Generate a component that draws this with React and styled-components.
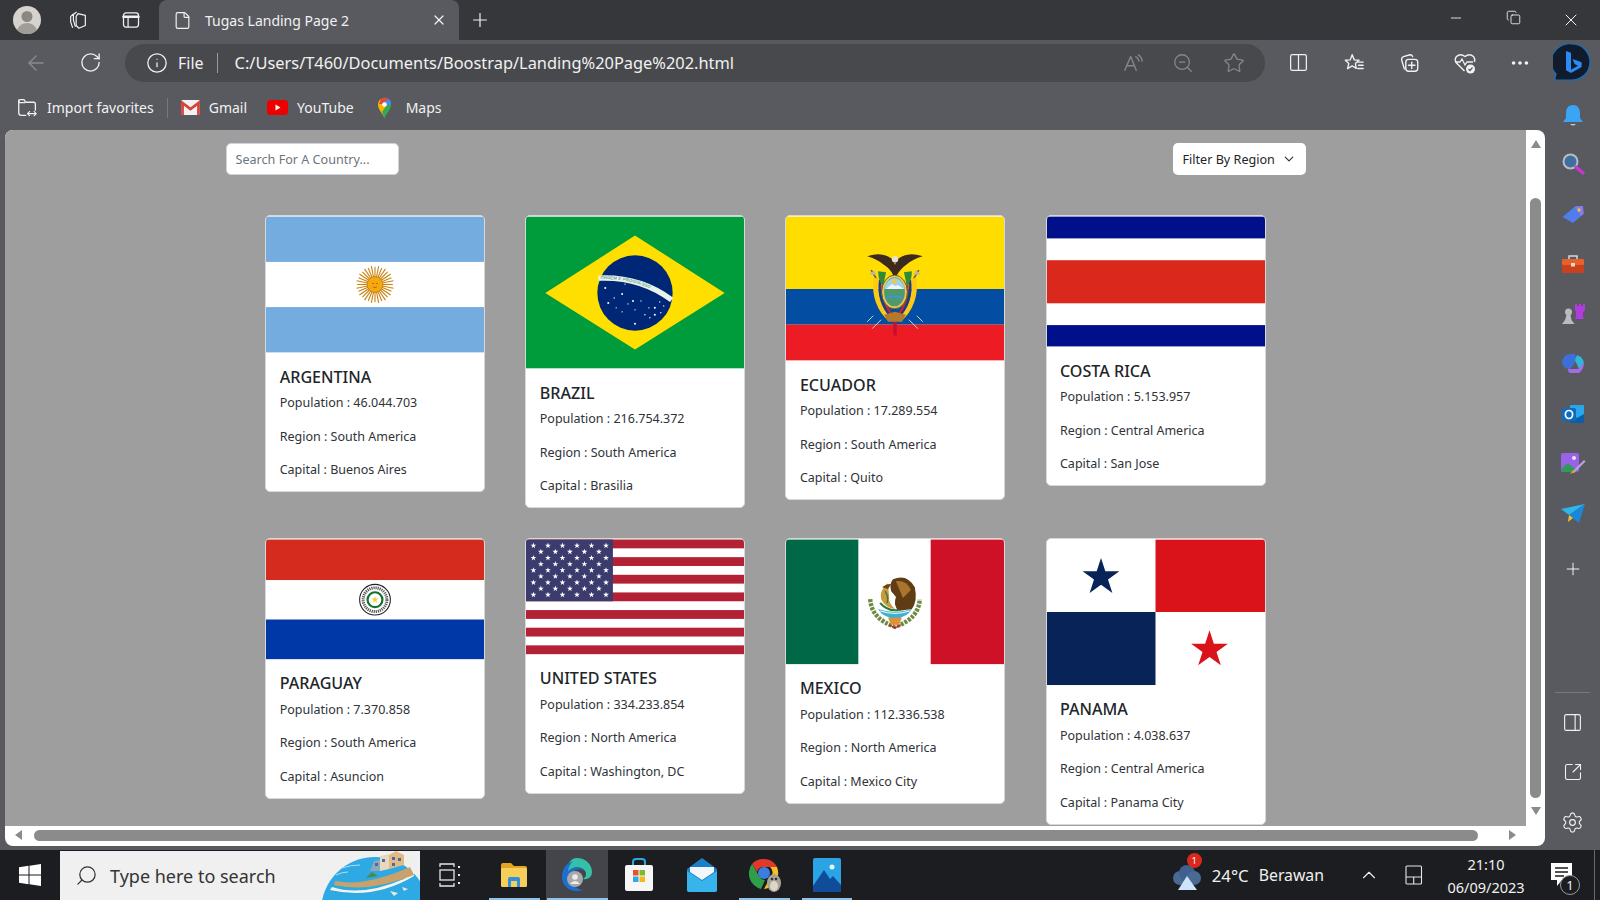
import React from "react"
import styled, { createGlobalStyle } from "styled-components"
import {
  ArrowLeft, ChevronUp, Copy, File, Info, Minus, Plus, RotateCw, Search,
  Settings, Star, X, ZoomOut, Ellipsis, Columns2, PanelRight, SquareArrowOutUpRight,
} from "lucide-react"

const GlobalStyle = createGlobalStyle`
  * { box-sizing: border-box; }
  html, body { margin: 0; padding: 0; overflow: hidden; }
  body { font-family: "Noto Sans", "Open Sans", sans-serif; }
`

const Screen = styled.div`
  width: 1600px;
  height: 900px;
  display: flex;
  flex-direction: column;
  background: #595a5f;
  color: #f1f1f1;
  overflow: hidden;
`

/* title bar */
const TitleBar = styled.div`
  height: 40px;
  display: flex;
  align-items: center;
  padding-left: 13px;
  background: #36373b;
`
const Avatar = styled.svg`
  width: 28px;
  height: 28px;
  margin-right: 10px;
  flex: none;
`
const TitleIcon = styled.div`
  width: 53px;
  display: flex;
  justify-content: center;
`
const Tab = styled.div`
  width: 300px;
  height: 40px;
  margin-left: 2px;
  padding: 0 12px 0 14px;
  display: flex;
  align-items: center;
  gap: 13px;
  background: #595a5f;
  border-radius: 8px 8px 0 0;
  font-size: 14px;
`
const TabClose = styled.span`
  margin-left: auto;
  display: flex;
`
const NewTab = styled.div`
  width: 42px;
  display: flex;
  justify-content: center;
`
const WindowControls = styled.div`
  margin-left: auto;
  display: flex;
`
const WindowButton = styled.div`
  width: 57.5px;
  display: flex;
  justify-content: center;
`

/* address bar */
const NavBar = styled.div`
  height: 45px;
  padding-left: 8px;
  display: flex;
  align-items: center;
`
const NavButton = styled.div`
  width: 55px;
  flex: none;
  display: flex;
  justify-content: center;
  color: ${p => (p.$dim ? "#8a8b8f" : "#f1f1f1")};
`
const AddressPill = styled.div`
  width: 1140px;
  height: 38px;
  flex: none;
  margin: 0 6px 0 7px;
  padding: 0 6px 0 21px;
  display: flex;
  align-items: center;
  background: #48494d;
  border-radius: 19px;
`
const FileLabel = styled.span`
  margin-left: 10px;
  font-size: 16px;
`
const AddressDivider = styled.span`
  width: 1px;
  height: 20px;
  margin: 0 17px 0 13px;
  background: #9a9b9e;
`
const Url = styled.span`
  font-size: 16.4px;
`
const PillIcons = styled.div`
  margin-left: auto;
  display: flex;
  color: #86878b;
`
const PillIcon = styled.div`
  width: 50.5px;
  display: flex;
  justify-content: center;
`
const BarIcon = styled.div`
  width: ${p => (p.$narrow ? 50 : 55.3)}px;
  flex: none;
  display: flex;
  justify-content: center;
`

/* bookmarks + page + sidebar */
const Workspace = styled.div`
  flex: 1;
  display: flex;
  min-height: 0;
`
const MainColumn = styled.div`
  width: 1545px;
  display: flex;
  flex-direction: column;
`
const BookmarkBar = styled.div`
  height: 45px;
  padding-left: 17px;
  display: flex;
  align-items: center;
  gap: 20px;
  font-size: 14px;
`
const Bookmark = styled.div`
  display: flex;
  align-items: center;
  gap: 9px;
`
const BookmarkDivider = styled.span`
  width: 1px;
  height: 20px;
  margin: 0 -7px;
  background: #77787c;
`
const PageFrame = styled.div`
  width: 1540px;
  height: 716px;
  margin-left: 5px;
  display: grid;
  grid-template-columns: 1521px 19px;
  grid-template-rows: 696px 20px;
  background: #fff;
  border-radius: 8px;
  overflow: hidden;
`
const Viewport = styled.div`
  background: #9e9e9e;
  overflow: hidden;
  color: #212529;
`
const VScroll = styled.div`
  padding-top: 10px;
  display: flex;
  flex-direction: column;
  align-items: center;
`
const ArrowUp = styled.span`
  border: 5.5px solid transparent;
  border-top: 0;
  border-bottom: 8px solid #8b8b8b;
`
const ArrowDown = styled.span`
  margin-top: 9px;
  border: 5.5px solid transparent;
  border-bottom: 0;
  border-top: 8px solid #8b8b8b;
`
const VThumb = styled.div`
  width: 11px;
  height: 600px;
  margin-top: 50px;
  background: #8b8b8b;
  border-radius: 6px;
`
const HScroll = styled.div`
  padding: 4px 0 0 10px;
  display: flex;
  align-items: flex-start;
`
const ArrowLeftTip = styled.span`
  border: 5.5px solid transparent;
  border-left: 0;
  border-right: 7px solid #8b8b8b;
`
const ArrowRightTip = styled.span`
  margin-left: 31px;
  border: 5.5px solid transparent;
  border-right: 0;
  border-left: 7px solid #8b8b8b;
`
const HThumb = styled.div`
  width: 1444px;
  height: 11px;
  margin-left: 12px;
  background: #8b8b8b;
  border-radius: 6px;
`

/* page content */
const Controls = styled.div`
  width: 1080px;
  margin: 13px 0 40px 220.5px;
  display: flex;
  justify-content: space-between;
`
const SearchInput = styled.input`
  width: 173px;
  height: 32px;
  padding: 0 9px;
  font: 12.6px "Noto Sans", sans-serif;
  color: #212529;
  background: #fff;
  border: 1px solid #ced4da;
  border-radius: 5px;
  outline: none;
  &::placeholder { color: #6c757d; opacity: 1; }
`
const FilterButton = styled.div`
  width: 133px;
  height: 32px;
  padding: 0 12px 0 10px;
  display: flex;
  align-items: center;
  justify-content: space-between;
  font-size: 12.6px;
  color: #212529;
  background: #fff;
  border-radius: 5px;
`
const CardGrid = styled.div`
  padding-left: 260.3px;
  display: grid;
  grid-template-columns: repeat(4, 220px);
  gap: 30px 40.1px;
  align-items: start;
`
const Card = styled.article`
  background: #fff;
  border: 1px solid #d8d8d8;
  border-radius: 5px;
  overflow: hidden;
`
const FlagBox = styled.svg`
  display: block;
  width: 100%;
  height: ${p => p.$height}px;
`
const CardBody = styled.div`
  height: 138px;
  padding: 13.6px 13.4px;
`
const CardTitle = styled.h5`
  margin: 0 0 6.7px;
  font-size: 16.1px;
  font-weight: 500;
  line-height: 20px;
  color: #212529;
  text-transform: uppercase;
`
const CardLine = styled.p`
  margin: 0 0 13.3px;
  font-size: 12.5px;
  line-height: 20px;
  color: #2f3338;
  &:last-child { margin-bottom: 0; }
`

/* edge sidebar */
const Sidebar = styled.aside`
  width: 55px;
  padding: 4px 0 3px;
  display: flex;
  flex-direction: column;
  align-items: center;
`
const SideItem = styled.div`
  height: 50px;
  flex: none;
  display: flex;
  align-items: center;
  justify-content: center;
`
const SideAdd = styled(SideItem)`
  margin-top: 5px;
`
const SideDivider = styled.div`
  width: 35px;
  height: 1px;
  margin-top: auto;
  margin-bottom: 4px;
  background: #77787c;
`

/* taskbar */
const Taskbar = styled.footer`
  height: 50px;
  display: flex;
  background: #1c1d20;
  flex: none;
`
const StartButton = styled.div`
  width: 60px;
  display: flex;
  align-items: center;
  justify-content: center;
`
const SearchBox = styled.div`
  width: 360px;
  margin-top: 1px;
  padding-left: 15px;
  display: flex;
  align-items: center;
  gap: 12px;
  background: #f0f0f0;
  color: #333;
  font-size: 18px;
  overflow: hidden;
`
const SearchArt = styled.svg`
  width: 100px;
  height: 49px;
  margin-left: auto;
  flex: none;
`
const TaskView = styled.div`
  width: 60px;
  margin-right: 3px;
  display: flex;
  align-items: center;
  justify-content: center;
`
const TaskItem = styled.div`
  width: 62.5px;
  display: flex;
  align-items: center;
  justify-content: center;
  position: relative;
  background: ${p => (p.$active ? "#44454a" : "transparent")};
  ${p => p.$open && `
    &::after {
      content: "";
      position: absolute;
      left: ${p.$active ? 1 : 6}px;
      right: ${p.$active ? 0 : 6}px;
      bottom: 0;
      height: 2.5px;
      background: #8fc3ea;
    }
  `}
`
const Tray = styled.div`
  margin-left: auto;
  display: flex;
  align-items: center;
  font-size: 15.8px;
`
const WeatherIcon = styled.div`
  position: relative;
  width: 30px;
  height: 26px;
  margin: 6px 10px 0 0;
`
const WeatherBadge = styled.span`
  position: absolute;
  top: -12px;
  right: 0;
  width: 15px;
  height: 15px;
  display: flex;
  align-items: center;
  justify-content: center;
  background: #d9281e;
  border-radius: 50%;
  font-size: 9.5px;
  color: #fff;
`
const Temperature = styled.span`
  margin-right: 10px;
  font-size: 16.8px;
`
const TrayIcon = styled.div`
  width: 45px;
  margin-left: ${p => p.$offset || 0}px;
  display: flex;
  justify-content: center;
`
const Clock = styled.div`
  width: 92px;
  margin-left: 4px;
  display: flex;
  flex-direction: column;
  align-items: center;
  gap: 3px;
  font-size: 14.5px;
  line-height: 20px;
`
const Notify = styled.div`
  position: relative;
  width: 62px;
  height: 50px;
  padding-left: 19px;
  display: flex;
  align-items: center;
`
const NotifyCount = styled.span`
  position: absolute;
  left: 28px;
  top: 25px;
  width: 20px;
  height: 20px;
  display: flex;
  align-items: center;
  justify-content: center;
  background: #1c1d20;
  border: 1px solid #9a9a9a;
  border-radius: 50%;
  font-size: 13px;
`
const ShowDesktop = styled.div`
  width: 6px;
  height: 50px;
  border-left: 1px solid #6a6a6a;
`

/* ---------- flags ---------- */
const starPoints = (cx, cy, r) => {
  const pts = []
  for (let i = 0; i < 10; i++) {
    const rad = i % 2 ? r * 0.382 : r
    const a = -Math.PI / 2 + (i * Math.PI) / 5
    pts.push(`${(cx + rad * Math.cos(a)).toFixed(2)},${(cy + rad * Math.sin(a)).toFixed(2)}`)
  }
  return pts.join(" ")
}

const Argentina = () => (
  <FlagBox $height={137} viewBox="0 0 220 137">
    <rect width="220" height="137" fill="#74acdf" />
    <rect y="45.7" width="220" height="45.6" fill="#fff" />
    {Array.from({ length: 32 }, (_, i) => {
      const a = (i * Math.PI) / 16
      const r = i % 2 ? 19 : 18
      return <line key={i} x1="110" y1="68.5" x2={110 + r * Math.cos(a)} y2={68.5 + r * Math.sin(a)} stroke="#c9820f" strokeWidth="1.1" />
    })}
    <circle cx="110" cy="68.5" r="8" fill="#f6a90e" stroke="#b87510" strokeWidth="0.7" />
    <path d="M107 67.5h2M111 67.5h2M108 71q2 1.2 4 0" stroke="#9a560a" strokeWidth="0.7" fill="none" />
  </FlagBox>
)

const brazilStars = [[83,87],[89,82],[91,92],[97,78],[97,96],[103,88],[108,85],[110,94],[116,85],[110,108],[120,99],[125,102],[130,99],[136,97],[135,86],[130,92],[139,90],[124,92],[80,72],[100,68],[112,66]]
const Brazil = () => (
  <FlagBox $height={153} viewBox="0 0 220 153">
    <rect width="220" height="153" fill="#009b3a" />
    <polygon points="19.5,77 110,19 200.5,77 110,134" fill="#fedf00" />
    <circle cx="110" cy="77" r="38" fill="#002776" />
    <path id="brazil-band" d="M73 62 Q115 60 147 84" fill="none" stroke="#e8f3ee" strokeWidth="5.5" />
    <text fontSize="4.2" fill="#1c7a4c" fontFamily="Liberation Sans, sans-serif" letterSpacing="0.25">
      <textPath href="#brazil-band" startOffset="2" dominantBaseline="middle">ORDEM E PROGRESSO</textPath>
    </text>
    {brazilStars.map(([x, y], i) => <circle key={i} cx={x} cy={y} r={i % 3 ? 0.7 : 1} fill="#fff" />)}
  </FlagBox>
)

const Ecuador = () => (
  <FlagBox $height={145} viewBox="0 0 220 145">
    <rect width="220" height="73" fill="#ffdd00" />
    <rect y="73" width="220" height="36" fill="#034ea2" />
    <rect y="109" width="220" height="36" fill="#ed1c24" />
    <path d="M110 106v14" stroke="#c8102e" strokeWidth="3.4" />
    <path d="M86 54l6 10M134 54l-6 10" stroke="#7a5a30" strokeWidth="1.600" />
    <path d="M84 58l5-4 2 5zM136 58l-5-4-2 5z" fill="#b8b8a8" />
    <path d="M88 100l-6 6M132 100l6 6M96 104l-9 9M124 104l9 9" stroke="#d8d8c8" strokeWidth="1" />
    <path d="M91 62q-3 26 15 42" fill="none" stroke="#fcc913" strokeWidth="5.500" />
    <path d="M129 62q3 26-15 42" fill="none" stroke="#fcc913" strokeWidth="5.500" />
    <path d="M95 64q-3 22 12 38" fill="none" stroke="#12408f" strokeWidth="2.400" />
    <path d="M125 64q3 22-12 38" fill="none" stroke="#12408f" strokeWidth="2.400" />
    <path d="M97.500 66q-2 20 11 35" fill="none" stroke="#d0202c" strokeWidth="2.200" />
    <path d="M122.500 66q2 20-11 35" fill="none" stroke="#d0202c" strokeWidth="2.200" />
    <path d="M93 55q0 10 5 15l3-14zM127 55q0 10-5 15l-3-14z" fill="#2f8a3c" />
    <ellipse cx="109.500" cy="76" rx="13" ry="17" fill="#e9c75a" stroke="#6f5a18" strokeWidth="1" />
    <ellipse cx="109.500" cy="76" rx="10.500" ry="14.500" fill="#4f9a6c" />
    <path d="M99.300 73a10.500 14.500 0 0 1 20.400 0z" fill="#9fd3ea" />
    <path d="M101 73l6-5 3 2 3-1 6 4z" fill="#f4f4f4" />
    <circle cx="109.500" cy="65.500" r="2.400" fill="#f6c544" />
    <path d="M101 82q8-3 17 0" stroke="#3f96d0" strokeWidth="2.200" fill="none" />
    <path d="M99 99l11-3 11 3-4 7h-14z" fill="#b5782a" />
    <path d="M82 40q14-5 24 2l4 3 4-3q10-7 24-2-10 3-16 8-7 5-10 11h-4q-2-6-10-11-6-5-16-8z" fill="#3c2a1e" />
    <circle cx="110" cy="43" r="3.200" fill="#e8e2d4" />
    <path d="M110 45l-1 3h2z" fill="#d8a030" />
  </FlagBox>
)

const CostaRica = () => (
  <FlagBox $height={131} viewBox="0 0 220 131">
    <rect width="220" height="131" fill="#fff" />
    <rect width="220" height="22" fill="#00108a" />
    <rect y="44" width="220" height="43.5" fill="#da291c" />
    <rect y="109.5" width="220" height="21.5" fill="#00108a" />
  </FlagBox>
)

const Paraguay = () => (
  <FlagBox $height={120.7} viewBox="0 0 220 120.7">
    <rect width="220" height="41" fill="#d52b1e" />
    <rect y="41" width="220" height="40" fill="#fff" />
    <rect y="80.7" width="220" height="40" fill="#0038a8" />
    <circle cx="110" cy="60.7" r="15.500" fill="#fff" stroke="#222" strokeWidth="1.100" />
    <circle cx="110" cy="60.7" r="12" fill="none" stroke="#555" strokeWidth="3" strokeDasharray="1.200 0.900" />
    <circle cx="110" cy="60.7" r="7.500" fill="none" stroke="#14702f" strokeWidth="2.200" />
    <polygon points={starPoints(110, 60.7, 3.800)} fill="#f2cf3a" />
  </FlagBox>
)

const UnitedStates = () => (
  <FlagBox $height={115.7} viewBox="0 0 220 115.7">
    <rect width="220" height="115.7" fill="#fff" />
    {Array.from({ length: 7 }, (_, i) => <rect key={i} y={i * 17.8} width="220" height="8.9" fill="#b22234" />)}
    <rect width="87.7" height="62.3" fill="#3c3b6e" />
    {Array.from({ length: 9 }, (_, row) =>
      Array.from({ length: row % 2 ? 5 : 6 }, (_, col) => (
        <polygon key={`${row}-${col}`} fill="#fff"
          points={starPoints((row % 2 ? 15 : 7.5) + col * 14.65, 6.2 + row * 6.2, 3.1)} />
      ))
    )}
  </FlagBox>
)

const Mexico = () => (
  <FlagBox $height={125.7} viewBox="0 0 220 125.7">
    <rect width="220" height="125.7" fill="#fff" />
    <rect width="73" height="125.7" fill="#006847" />
    <rect x="146" width="74" height="125.7" fill="#ce1126" />
    <path d="M85 60q1 20 25 28 24-8 25-28" fill="none" stroke="#6f8a44" strokeWidth="4.500" strokeDasharray="3 1.200" />
    <path d="M93 70q17 6 34 0-4 8-17 10-13-2-17-10z" fill="#3fb0d0" />
    <path d="M95 72q15 5 30 0" fill="none" stroke="#fff" strokeWidth="1" />
    <path d="M103 79h14l-3 7h-8z" fill="#de9238" />
    <path d="M104 86l6 3 6-3" stroke="#c8102e" strokeWidth="1.200" fill="none" />
    <path d="M108 40q14-6 22 8 3 14-3 22l-14 2q-5-7-2-14l-5-6q-2-8 2-12z" fill="#5f3c14" />
    <path d="M111 42q11-1 15 9l-8 8z" fill="#a9752c" />
    <path d="M103 44q-9 7-7 16 4 9 14 10-7-6-6-12z" fill="#c99a3e" />
    <path d="M97 48q5-4 9-3l-3 5z" fill="#6b4316" />
    <path d="M95 64q8 9 19 7" stroke="#2f7a3a" strokeWidth="2" fill="none" />
    <path d="M100 52q4 6 2 12" stroke="#3f7a3a" strokeWidth="1.400" fill="none" />
  </FlagBox>
)

const Panama = () => (
  <FlagBox $height={146.7} viewBox="0 0 220 146.7">
    <rect width="220" height="146.7" fill="#fff" />
    <rect x="109.5" width="110.5" height="73" fill="#da121a" />
    <rect y="73" width="109.5" height="73.7" fill="#072357" />
    <polygon points={starPoints(54.5, 38, 19.5)} fill="#072357" />
    <polygon points={starPoints(164, 111, 19.5)} fill="#da121a" />
  </FlagBox>
)

const countries = [
  { name: "Argentina", population: "46.044.703", region: "South America", capital: "Buenos Aires", Flag: Argentina },
  { name: "Brazil", population: "216.754.372", region: "South America", capital: "Brasilia", Flag: Brazil },
  { name: "Ecuador", population: "17.289.554", region: "South America", capital: "Quito", Flag: Ecuador },
  { name: "Costa Rica", population: "5.153.957", region: "Central America", capital: "San Jose", Flag: CostaRica },
  { name: "Paraguay", population: "7.370.858", region: "South America", capital: "Asuncion", Flag: Paraguay },
  { name: "United States", population: "334.233.854", region: "North America", capital: "Washington, DC", Flag: UnitedStates },
  { name: "Mexico", population: "112.336.538", region: "North America", capital: "Mexico City", Flag: Mexico },
  { name: "Panama", population: "4.038.637", region: "Central America", capital: "Panama City", Flag: Panama },
]

/* ---------- browser icons ---------- */
const Svg = ({ size = 24, vb = "0 0 24 24", children, ...rest }) => (
  <svg width={size} height={size} viewBox={vb} fill="none" stroke="currentColor" strokeWidth="1.5" strokeLinecap="round" strokeLinejoin="round" {...rest}>
    {children}
  </svg>
)

const CollectionsTabs = () => (
  <Svg size={22} strokeWidth="1.300">
    <path d="M7 5.500 4 8v6l2 6M10 3.500 7 6v6l2 7" />
    <path d="M12 5l8 2v11l-7 3-3-3V8z" />
  </Svg>
)
const TabActions = () => (
  <Svg size={20}>
    <rect x="3" y="3.500" width="18" height="17" rx="3" />
    <path d="M3 8h18" strokeWidth="3" />
    <path d="M8.500 9v11" />
  </Svg>
)
const ReadAloud = () => (
  <Svg size={22}>
    <path d="M3 20 9.500 5l6 15M5.500 15h8" />
    <path d="M15 5q3 1.500 3.500 5M18 3q3.500 2.500 4 7" />
  </Svg>
)
const FavoritesBar = () => (
  <Svg size={22}>
    <path d="M10 3l2.300 5.600 5.200.4-4 3.600 1 5.200-4.500-2.600-5 3 1.300-5.600L2.500 9l5.400-.4z" />
    <path d="M16 11h6M17 14.500h5M16 18h6" />
  </Svg>
)
const CollectionsAdd = () => (
  <Svg size={22}>
    <path d="M7 18.500 4 9q-.5-3 2-4l7-2q2.500 0 3 2" />
    <rect x="8.500" y="8" width="13" height="13" rx="3" />
    <path d="M15 11v7M11.500 14.500h7" />
  </Svg>
)
const HealthBadge = () => (
  <svg width="24" height="24" viewBox="0 0 24 24" fill="none">
    <path d="M11.500 20 3.500 12Q1 8.500 3.500 5.500q4-3.500 8.500 0 4.500-3.500 8.500 0 2 2.500 1 5.500" stroke="#f1f1f1" strokeWidth="1.400" />
    <path d="M2 11h5l2-3 3 6 2-3h6" stroke="#f1f1f1" strokeWidth="1.300" />
    <circle cx="17.500" cy="18" r="4.500" fill="#f1f1f1" />
    <path d="m15.500 18 1.500 1.500 2.500-3" stroke="#595a5f" strokeWidth="1.200" />
  </svg>
)
const BingBubble = () => (
  <svg width="38" height="40" viewBox="0 0 38 40">
    <path d="M19 1a18 18 0 0 1 0 36H3q-1.500 0-1-2l1-4A18 18 0 0 1 19 1z" fill="#101b2e" stroke="#1d6fb8" strokeWidth="1.200" />
    <path d="M13 8l5 1.700v17l7-4-3.400-1.600-2-5 9 3.200v4.700L18 30l-5-2.800z" fill="#2a8cf0" />
  </svg>
)
const ImportFavorites = () => (
  <Svg size={21}>
    <path d="M10 21H5q-3 0-3-3V5q0-2 2-2h4l2 3h9q2 0 2 2v7" />
    <path d="M2 3.500v3h7" />
    <path d="M12 19h10M14.500 16.500 12 19l2.500 2.500M19.500 16.500 22 19l-2.500 2.500" strokeWidth="1.200" />
  </Svg>
)
const GmailIcon = () => (
  <svg width="19" height="15" viewBox="0 0 19 15">
    <rect width="19" height="15" rx="1.500" fill="#f2f2f2" />
    <path d="M1.500 15V3l8 6 8-6v12" fill="none" stroke="#d6453a" strokeWidth="2.800" />
    <path d="M0 2l9.500 7L19 2" fill="none" stroke="#d6453a" strokeWidth="1.600" />
  </svg>
)
const YoutubeIcon = () => (
  <svg width="21" height="15" viewBox="0 0 21 15">
    <rect width="21" height="15" rx="3.500" fill="#ee0000" />
    <polygon points="8.500,4.500 13.500,7.500 8.500,10.500" fill="#fff" />
  </svg>
)
const MapsIcon = () => (
  <svg width="23" height="21" viewBox="0 0 23 21">
    <path d="M10.500 21C8.500 16 4 13 4 7.500A6.500 6.500 0 0 1 7 2l6 8z" fill="#f4b400" />
    <path d="M7 2a6.500 6.500 0 0 1 7.500-.2L10 7 5 7z" fill="#e04a3b" />
    <path d="M14.500 1.800A6.500 6.500 0 0 1 17 7.500L12 10 9 6z" fill="#4a89f0" />
    <path d="M17 7.500c0 5.500-4.500 8.500-6.500 13.500L8 15 13 8z" fill="#34a853" />
    <circle cx="10.500" cy="7.500" r="2.300" fill="#fff" />
  </svg>
)
const BellIcon = () => (
  <svg width="22" height="24" viewBox="0 -2 22 24">
    <path d="M11 1c4.500 0 7 3.500 7 8v5l3 4H1l3-4V9c0-4.500 2.500-8 7-8z" fill="#3aa4f5" />
    <path d="M8 20q3 3 6 0z" fill="#c9c9c9" />
  </svg>
)
const LensIcon = () => (
  <svg width="24" height="24" viewBox="0 0 24 24">
    <circle cx="9.500" cy="9.500" r="7" fill="#3f6f9f" stroke="#b8bcc2" strokeWidth="2" />
    <path d="m15 15 7 6" stroke="#c23ad0" strokeWidth="3.400" strokeLinecap="round" />
  </svg>
)
const TagIcon = () => (
  <svg width="24" height="24" viewBox="0 0 24 24">
    <path d="M1.500 15 14 4.500l8-.5.500 8L12 21z" fill="#4f7dea" />
    <path d="M14 4.500l8-.5.500 8L20 14z" fill="#8a7be8" />
    <circle cx="18" cy="8" r="1.700" fill="#f0c030" />
  </svg>
)
const ToolboxIcon = () => (
  <svg width="24" height="24" viewBox="0 0 24 24">
    <path d="M8 7V4h8v3" fill="none" stroke="#d9d9d9" strokeWidth="1.500" />
    <rect x="1" y="7" width="22" height="6" rx="1" fill="#e8602c" />
    <rect x="1" y="13" width="22" height="8" rx="1" fill="#c8431c" />
    <rect x="10" y="11" width="4" height="3.500" fill="#f0d8c8" />
  </svg>
)
const ChessIcon = () => (
  <svg width="26" height="24" viewBox="0 0 26 24">
    <circle cx="8.500" cy="10" r="3.500" fill="#b9bbbe" />
    <path d="M6.500 13h4l1 5 3 4H2l3-4z" fill="#b9bbbe" />
    <path d="M15 2h2v2h2V2h2v2h2V2h2v6l-2 2v5l1 2H15l1-2v-5l-1-2z" fill="#b23be0" />
  </svg>
)
const CopilotIcon = () => (
  <svg width="24" height="24" viewBox="0 0 24 24">
    <path d="M8 2h6l2 6-7 9H7Q1 15 1 9q2-6 7-7z" fill="#3c6fd8" />
    <path d="M16 3q6 2 7 8l-5 6-4-9z" fill="#2fb6d8" />
    <path d="M7 17h10l6-6q0 6-5 10H9q-2-1-2-4z" fill="#a46be8" />
  </svg>
)
const OutlookIcon = () => (
  <svg width="24" height="24" viewBox="0 0 24 24">
    <rect x="9" y="3" width="14" height="18" rx="1" fill="#28a8ea" />
    <path d="M9 12l7 4 7-4v9H9z" fill="#0a5fa8" />
    <rect x="1" y="6" width="14" height="13" rx="1.500" fill="#0f6cbd" />
    <ellipse cx="8" cy="12.500" rx="3.600" ry="4" fill="none" stroke="#fff" strokeWidth="1.700" />
  </svg>
)
const DesignerIcon = () => (
  <svg width="26" height="24" viewBox="0 0 26 24">
    <rect x="1" y="1" width="18" height="19" rx="2" fill="#9a63e6" />
    <path d="M1 17l7-6 6 5 4 4H3z" fill="#2f9a5a" />
    <circle cx="14" cy="6" r="2" fill="#f0e0ff" />
    <path d="M12 20l12-12 1.500 1.500L14 21z" fill="#c69be8" />
    <path d="M10 22l3-4 2 2z" fill="#e8a028" />
  </svg>
)
const SendIcon = () => (
  <svg width="26" height="24" viewBox="0 0 26 24">
    <path d="M1 7 25 2 9 13z" fill="#2fb6e8" />
    <path d="M9 13 25 2l-6 19z" fill="#1b87d8" />
    <path d="M9 13l-1 7 5-4z" fill="#f0c030" />
  </svg>
)
const WindowsLogo = () => (
  <svg width="22" height="22" viewBox="0 0 22 22" fill="#fff">
    <path d="M0 3.200 9.500 1.800V10.500H0zM10.500 1.700 22 0V10.500H10.500zM0 11.500H9.500V20.200L0 18.800zM10.500 11.500H22V22L10.500 20.300z" />
  </svg>
)
const TaskViewIcon = () => (
  <svg width="22" height="24" viewBox="0 0 22 24" fill="none" stroke="#e6e6e6" strokeWidth="1.300">
    <path d="M1 4V1h14v3M1 20v3h14v-3" />
    <rect x="1" y="7" width="14" height="10" />
    <path d="M20 3v2M20 11v2M20 19v2" strokeWidth="2" />
  </svg>
)
const ExplorerIcon = () => (
  <svg width="28" height="26" viewBox="0 0 28 26">
    <path d="M1 3q0-2 2-2h8l3 3h11q2 0 2 2v4H1z" fill="#e5a522" />
    <rect x="1" y="6" width="26" height="19" rx="1.500" fill="#f6cf5a" />
    <path d="M8 25v-8q0-2 2-2h8q2 0 2 2v8h-3v-6h-6v6z" fill="#2f8fd8" />
  </svg>
)
const EdgeIcon = () => (
  <svg width="32" height="36" viewBox="0 0 32 36">
    <path d="M16 1c8 0 15 6 15 14 0 5-4 8-9 7 3-2 4-5 2-8-3-5-13-5-17 1C5 9 9 1 16 1z" fill="#35c1a8" />
    <path d="M7 15c4-6 14-6 17-1-4-3-12-2-14 4-2 7 3 14 12 15C11 37 1 30 1 20 1 11 6 6 12 4 9 7 7 11 7 15z" fill="#1c6fd0" />
    <circle cx="14" cy="22" r="8" fill="#a9a9a9" />
    <circle cx="14" cy="20" r="2.800" fill="#ededed" />
    <path d="M9 27q5-6 10 0z" fill="#ededed" />
  </svg>
)
const StoreIcon = () => (
  <svg width="30" height="34" viewBox="0 0 30 34">
    <path d="M9 8V4q0-3 3-3h6q3 0 3 3v4" fill="none" stroke="#2fa8e0" strokeWidth="2" />
    <rect x="1" y="7" width="28" height="26" rx="2" fill="#f6f6f6" />
    <rect x="9" y="12" width="5.500" height="5.500" fill="#e8532c" />
    <rect x="15.500" y="12" width="5.500" height="5.500" fill="#7fba2c" />
    <rect x="9" y="18.500" width="5.500" height="5.500" fill="#2fa8e8" />
    <rect x="15.500" y="18.500" width="5.500" height="5.500" fill="#f5b81c" />
  </svg>
)
const MailIcon = () => (
  <svg width="30" height="34" viewBox="0 0 30 34">
    <path d="M15 0 30 11v21q0 2-2 2H2q-2 0-2-2V11z" fill="#1b7fc8" />
    <path d="M3 9h24v5L15 22 3 14z" fill="#f2f7fb" />
    <path d="M0 13l15 10 15-10v19q0 2-2 2H2q-2 0-2-2z" fill="#38b4ec" />
  </svg>
)
const ChromeIcon = () => (
  <svg width="36" height="36" viewBox="-2 0 36 36">
    <path d="M16 2A15 15 0 0 1 29 10H16a7 7 0 0 0-7 5L4 7A15 15 0 0 1 16 2z" fill="#e0392c" />
    <path d="M4 7l7 12a7 7 0 0 0 6 4l-4 9A16 16 0 0 1 4 7z" fill="#2f9e4a" />
    <path d="M29 10a16 16 0 0 1-13 22l6-11a7 7 0 0 0 0-11z" fill="#f6c026" />
    <circle cx="16" cy="16" r="6" fill="#3a7fe0" />
    <ellipse cx="26" cy="26" rx="7" ry="9" fill="#a9a296" />
    <circle cx="24" cy="22" r="1.300" fill="#333" />
    <circle cx="28" cy="22" r="1.300" fill="#333" />
    <ellipse cx="26" cy="29" rx="4" ry="5" fill="#dcd6c6" />
  </svg>
)
const PhotosIcon = () => (
  <svg width="28" height="34" viewBox="0 0 28 34">
    <rect width="28" height="34" rx="2" fill="#2aa4e4" />
    <circle cx="19" cy="9" r="2.500" fill="#e8f6ff" />
    <path d="M0 28 11 12l6 9 3-3 8 9v5q0 2-2 2H2q-2 0-2-2z" fill="#0f4c9a" />
  </svg>
)
const IslandArt = () => (
  <SearchArt viewBox="0 0 100 49">
    <circle cx="55" cy="60" r="54" fill="#2ea9e4" />
    <path d="M12 36q30 10 72-8l10-8v5q-40 24-84 14z" fill="#f5f5ee" />
    <path d="M15 30q30 6 75-14l4 8q-45 18-80 10z" fill="#c8a26a" />
    <path d="M50 20l4-10 8-2v12z" fill="#8fa8b8" />
    <path d="M60 20V5l9-2v15z" fill="#e8d8c0" />
    <path d="M69 18V4l7-4 8 4v10z" fill="#e6b884" />
    <path d="M84 14V8l8-3 4 6z" fill="#f0f0ea" />
    <path d="M46 27l6-6 6 4z" fill="#4a8a4a" />
    <path d="M62 8h3v3h-3zM72 6h3v3h-3zM72 12h3v3h-3zM78 7h3v3h-3z" fill="#3f6fa8" />
    <path d="M55 12h3v3h-3z" fill="#3f6fa8" />
    <path d="M70 40l8 2-4 3zM82 36l6 2-4 2z" fill="#e8e8e8" />
    <path d="M22 17q8-3 18-3M16 24q6-3 12-3" stroke="#a8def5" strokeWidth="1" fill="none" />
  </SearchArt>
)
const WeatherCloud = () => (
  <svg width="30" height="26" viewBox="0 0 30 26">
    <circle cx="8" cy="13" r="7" fill="#4a6a96" />
    <circle cx="15" cy="8" r="8" fill="#3f5f8e" />
    <circle cx="22" cy="13" r="7" fill="#4a6a96" />
    <polygon points="15,11 25,25 6,25" fill="#cfe4fa" />
  </svg>
)
const TouchpadIcon = () => (
  <svg width="18" height="20" viewBox="0 0 18 20" fill="none" stroke="#e6e6e6" strokeWidth="1.100">
    <rect x="1" y="1" width="15.500" height="18" rx="1" />
    <path d="M1 12h15.500M8.700 12v7" />
  </svg>
)
const NotifyGlyph = () => (
  <svg width="21" height="24" viewBox="0 0 21 24">
    <path d="M0 0h21v17h-10l-5 6v-6H0z" fill="#fff" />
    <path d="M4 5h13M4 9h13M4 13h9" stroke="#1c1d20" strokeWidth="1.300" />
  </svg>
)

const sideApps = [BellIcon, LensIcon, TagIcon, ToolboxIcon, ChessIcon, CopilotIcon, OutlookIcon, DesignerIcon, SendIcon]
const taskApps = [
  { key: "explorer", Icon: ExplorerIcon, open: true },
  { key: "edge", Icon: EdgeIcon, open: true, active: true },
  { key: "store", Icon: StoreIcon },
  { key: "mail", Icon: MailIcon },
  { key: "chrome", Icon: ChromeIcon, open: true },
  { key: "photos", Icon: PhotosIcon, open: true },
]

const MirroredSearch = styled(Search)`
  transform: scaleX(-1);
  flex: none;
`

export default function App() {
  return (
    <Screen>
      <GlobalStyle />
      <TitleBar>
        <Avatar viewBox="0 0 28 28">
          <circle cx="14" cy="14" r="14" fill="#d6d3cf" />
          <circle cx="14" cy="10.500" r="5.500" fill="#8a8782" />
          <path d="M4 24q3-7 10-7t10 7a14 14 0 0 1-20 0z" fill="#a09d98" />
        </Avatar>
        <TitleIcon><CollectionsTabs /></TitleIcon>
        <TitleIcon><TabActions /></TitleIcon>
        <Tab>
          <File size={19} strokeWidth={1.500} />
          <span>Tugas Landing Page 2</span>
          <TabClose><X size={16} strokeWidth={1.800} /></TabClose>
        </Tab>
        <NewTab><Plus size={22} strokeWidth={1.300} /></NewTab>
        <WindowControls>
          <WindowButton><Minus size={16} strokeWidth={1.300} /></WindowButton>
          <WindowButton><Copy size={15} strokeWidth={1.400} /></WindowButton>
          <WindowButton><X size={20} strokeWidth={1.200} /></WindowButton>
        </WindowControls>
      </TitleBar>

      <NavBar>
        <NavButton $dim><ArrowLeft size={24} strokeWidth={1.300} /></NavButton>
        <NavButton><RotateCw size={23} strokeWidth={1.400} /></NavButton>
        <AddressPill>
          <Info size={22} strokeWidth={1.400} />
          <FileLabel>File</FileLabel>
          <AddressDivider />
          <Url>C:/Users/T460/Documents/Boostrap/Landing%20Page%202.html</Url>
          <PillIcons>
            <PillIcon><ReadAloud /></PillIcon>
            <PillIcon><ZoomOut size={22} strokeWidth={1.400} /></PillIcon>
            <PillIcon><Star size={22} strokeWidth={1.400} /></PillIcon>
          </PillIcons>
        </AddressPill>
        <BarIcon><Columns2 size={21} strokeWidth={1.400} /></BarIcon>
        <BarIcon><FavoritesBar /></BarIcon>
        <BarIcon><CollectionsAdd /></BarIcon>
        <BarIcon><HealthBadge /></BarIcon>
        <BarIcon><Ellipsis size={22} strokeWidth={2} /></BarIcon>
        <BarIcon $narrow><BingBubble /></BarIcon>
      </NavBar>

      <Workspace>
        <MainColumn>
          <BookmarkBar>
            <Bookmark><ImportFavorites /><span>Import favorites</span></Bookmark>
            <BookmarkDivider />
            <Bookmark><GmailIcon /><span>Gmail</span></Bookmark>
            <Bookmark><YoutubeIcon /><span>YouTube</span></Bookmark>
            <Bookmark><MapsIcon /><span>Maps</span></Bookmark>
          </BookmarkBar>
          <PageFrame>
            <Viewport>
              <Controls>
                <SearchInput placeholder="Search For A Country..." />
                <FilterButton>
                  <span>Filter By Region</span>
                  <svg width="10" height="10" viewBox="0 0 16 16" fill="none" stroke="#343a40" strokeWidth="2" strokeLinecap="round" strokeLinejoin="round">
                    <path d="m2 5 6 6 6-6" />
                  </svg>
                </FilterButton>
              </Controls>
              <CardGrid>
                {countries.map(({ name, population, region, capital, Flag }) => (
                  <Card key={name}>
                    <Flag />
                    <CardBody>
                      <CardTitle>{name}</CardTitle>
                      <CardLine>Population : {population}</CardLine>
                      <CardLine>Region : {region}</CardLine>
                      <CardLine>Capital : {capital}</CardLine>
                    </CardBody>
                  </Card>
                ))}
              </CardGrid>
            </Viewport>
            <VScroll>
              <ArrowUp />
              <VThumb />
              <ArrowDown />
            </VScroll>
            <HScroll>
              <ArrowLeftTip />
              <HThumb />
              <ArrowRightTip />
            </HScroll>
            <div />
          </PageFrame>
        </MainColumn>
        <Sidebar>
          {sideApps.map((Icon, i) => <SideItem key={i}><Icon /></SideItem>)}
          <SideAdd><Plus size={20} strokeWidth={1.200} /></SideAdd>
          <SideDivider />
          <SideItem><PanelRight size={21} strokeWidth={1.300} /></SideItem>
          <SideItem><SquareArrowOutUpRight size={20} strokeWidth={1.300} /></SideItem>
          <SideItem><Settings size={23} strokeWidth={1.200} /></SideItem>
        </Sidebar>
      </Workspace>

      <Taskbar>
        <StartButton><WindowsLogo /></StartButton>
        <SearchBox>
          <MirroredSearch size={23} strokeWidth={1.300} />
          <span>Type here to search</span>
          <IslandArt />
        </SearchBox>
        <TaskView><TaskViewIcon /></TaskView>
        {taskApps.map(({ key, Icon, open, active }) => (
          <TaskItem key={key} $open={open} $active={active}><Icon /></TaskItem>
        ))}
        <Tray>
          <WeatherIcon>
            <WeatherCloud />
            <WeatherBadge>1</WeatherBadge>
          </WeatherIcon>
          <Temperature>24°C</Temperature>
          <span>Berawan</span>
          <TrayIcon $offset={22}><ChevronUp size={22} strokeWidth={1.200} /></TrayIcon>
          <TrayIcon><TouchpadIcon /></TrayIcon>
          <Clock>
            <span>21:10</span>
            <span>06/09/2023</span>
          </Clock>
          <Notify>
            <NotifyGlyph />
            <NotifyCount>1</NotifyCount>
          </Notify>
          <ShowDesktop />
        </Tray>
      </Taskbar>
    </Screen>
  )
}
